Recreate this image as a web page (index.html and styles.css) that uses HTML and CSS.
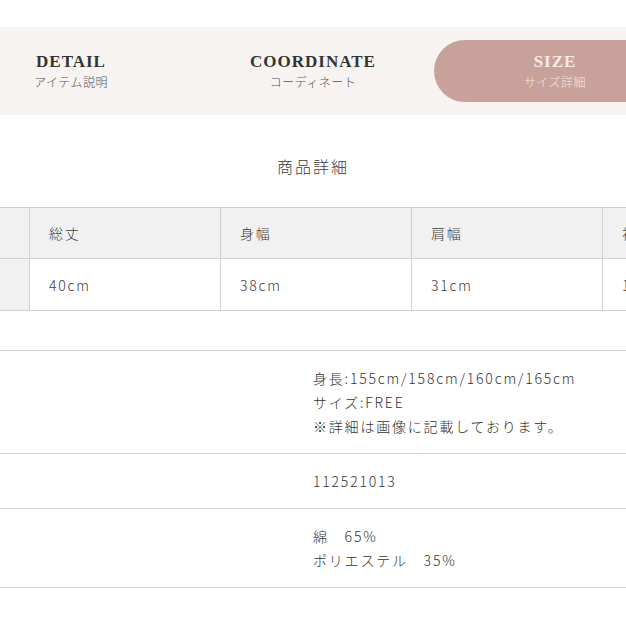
FILE: index.html
```html
<!DOCTYPE html>
<html lang="ja">
<head>
<meta charset="utf-8">
<link rel="stylesheet" href="styles.css">
</head>
<body>
<div class="page">
  <nav class="tabs">
    <div class="tab-row">
      <div class="tab"><div class="tab-inner"><span class="tab-en">DETAIL</span><span class="tab-ja">アイテム説明</span></div></div>
      <div class="tab"><div class="tab-inner"><span class="tab-en">COORDINATE</span><span class="tab-ja">コーディネート</span></div></div>
      <div class="tab active"><div class="tab-inner"><span class="tab-en">SIZE</span><span class="tab-ja">サイズ詳細</span></div></div>
    </div>
  </nav>

  <h2 class="title">商品詳細</h2>

  <div class="size-wrap">
    <table class="size-table">
      <tr class="head">
        <th></th><th>総丈</th><th>身幅</th><th>肩幅</th><th>袖丈</th>
      </tr>
      <tr>
        <th class="label"></th><td>40cm</td><td>38cm</td><td>31cm</td><td>16cm</td>
      </tr>
    </table>
  </div>

  <div class="info">
    <div class="info-row">
      <div class="info-label"></div>
      <div class="info-value">身長:155cm/158cm/160cm/165cm<br>サイズ:FREE<br>※詳細は画像に記載しております。</div>
    </div>
    <div class="info-row">
      <div class="info-label"></div>
      <div class="info-value">112521013</div>
    </div>
    <div class="info-row">
      <div class="info-label"></div>
      <div class="info-value">綿　65%<br>ポリエステル　35%</div>
    </div>
  </div>
</div>
</body>
</html>
```

FILE: styles.css
```css
html, body {
  margin: 0;
  padding: 0;
  background: #fff;
}
body {
  width: 626px;
  height: 626px;
  overflow: hidden;
  font-family: "Noto Sans CJK JP", "Noto Sans", sans-serif;
  font-weight: 300;
  color: #333;
}
.page {
  padding-top: 27px;
}
.tabs {
  background: #f6f3f1;
  height: 88px;
  overflow: hidden;
}
.tab-row {
  display: flex;
  margin-left: -50px;
  padding-top: 13px;
}
.tab {
  flex: 0 0 242px;
  height: 62px;
}
.tab-inner {
  height: 100%;
  display: flex;
  flex-direction: column;
  align-items: center;
  justify-content: center;
}
.tab.active .tab-inner {
  background: #c9a19b;
  border-radius: 31px 0 0 31px;
}
.tab-en {
  font-family: "Liberation Serif", "DejaVu Serif", serif;
  font-weight: 700;
  font-size: 17px;
  letter-spacing: 1px;
  line-height: 20px;
  color: #333;
}
.tab-ja {
  font-size: 12px;
  line-height: 18px;
  letter-spacing: 0.5px;
  color: #555;
  margin-top: 1px;
}
.tab.active .tab-en { color: #f6ebe8; }
.tab.active .tab-ja { color: #f3e4e0; }

.title {
  margin: 0;
  height: 92px;
  display: flex;
  align-items: center;
  justify-content: center;
  padding-top: 10px;
  box-sizing: border-box;
  font-size: 16px;
  font-weight: 300;
  letter-spacing: 2px;
  color: #3c3c3c;
}

.size-wrap {
  overflow: hidden;
  width: 626px;
}
.size-table {
  border-collapse: collapse;
  margin-left: -162px;
  table-layout: fixed;
  width: 955px;
}
.size-table th,
.size-table td {
  width: 191px;
  border: 1px solid #d2d2d2;
  padding: 0 0 0 19px;
  box-sizing: border-box;
  text-align: left;
  font-weight: 300;
  font-size: 14px;
  letter-spacing: 1.8px;
  color: #3c3c3c;
  white-space: nowrap;
}
.size-table tr.head th {
  height: 51px;
  background: #f1f1f1;
}
.size-table td,
.size-table th.label {
  height: 52px;
}
.size-table th.label {
  background: #f1f1f1;
}

.info {
  margin-top: 39px;
  border-top: 1px solid #d4d4d4;
}
.info-row {
  display: flex;
  border-bottom: 1px solid #d4d4d4;
}
.info-label {
  flex: 0 0 313px;
}
.info-value {
  padding: 15px 0 15px 0;
  font-size: 14px;
  line-height: 24px;
  letter-spacing: 1.8px;
  color: #333;
}
```
